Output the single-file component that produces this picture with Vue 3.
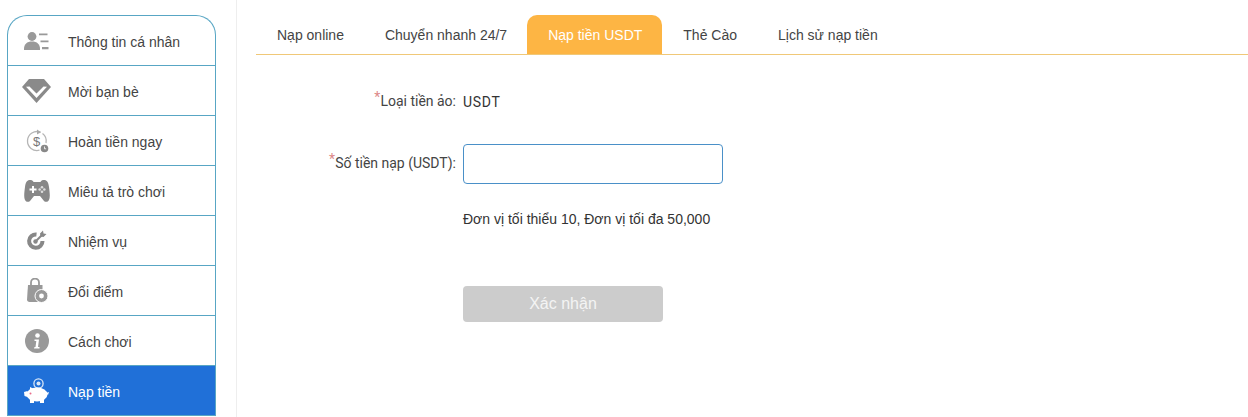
<script setup>
const menu = [
  { label: 'Thông tin cá nhân', icon: 'user' },
  { label: 'Mời bạn bè', icon: 'gem' },
  { label: 'Hoàn tiền ngay', icon: 'refund' },
  { label: 'Miêu tả trò chơi', icon: 'game' },
  { label: 'Nhiệm vụ', icon: 'target' },
  { label: 'Đổi điểm', icon: 'bag' },
  { label: 'Cách chơi', icon: 'info' },
  { label: 'Nạp tiền', icon: 'piggy', active: true },
]
const tabs = [
  { label: 'Nạp online' },
  { label: 'Chuyển nhanh 24/7' },
  { label: 'Nạp tiền USDT', active: true },
  { label: 'Thẻ Cào' },
  { label: 'Lịch sử nạp tiền' },
]
</script>

<template>
  <div class="page">
    <aside class="side">
      <ul class="menu">
        <li v-for="m in menu" :key="m.label" class="item" :class="{ active: m.active }">
          <span class="ico">
            <svg v-if="m.icon === 'user'" width="26" height="18" viewBox="0 0 26 18">
              <circle cx="8" cy="4.500" r="4.400" fill="#999" />
              <path d="M0 17c0-5 3-7.500 8-7.500s8 2.500 8 7.500v1H0z" fill="#999" />
              <path d="M15 1.500h8.500v1.800H15zM16.500 8.500h8v1.800h-8zM18 15h6.500v2.200H18z" fill="#999" />
            </svg>
            <svg v-else-if="m.icon === 'gem'" width="29" height="25" viewBox="0 0 29 25">
              <path d="M7 1h15l7 8-14.500 16L0 9z" fill="#8a8a8a" />
              <path d="M7.500 8.500l7 7 7-7 3.500.2L14.500 20 4 8.700z" fill="#fff" />
            </svg>
            <svg v-else-if="m.icon === 'refund'" width="24" height="24" viewBox="0 0 24 24">
              <path d="M15.500 3.200A9.500 9.500 0 1 0 14.500 21.200" fill="none" stroke="#b5b5b5" stroke-width="1.300" />
              <path d="M21 14A9.500 9.500 0 0 0 17.500 4.500" fill="none" stroke="#b5b5b5" stroke-width="1.300" />
              <path d="M12 .5l4 2.700-4 2.300z" fill="#aaa" />
              <text x="8" y="17" font-size="13" font-family="Liberation Sans" fill="#777">$</text>
              <circle cx="19.500" cy="19.500" r="3.800" fill="#888" />
              <path d="M19.500 17.500v2.300h1.600" fill="none" stroke="#fff" stroke-width=".8" />
            </svg>
            <svg v-else-if="m.icon === 'game'" width="26" height="24" viewBox="0 0 26 24">
              <path d="M6 1c1.500 0 3 .5 3.500 2h7C17 1.500 18.500 1 20 1c3 0 4.500 2.500 5 7s1.500 10 0 13c-1 2-3.500 2.500-5 1l-4-5H10l-4 5c-1.500 1.500-4 1-5-1C-.5 18 .5 12.500 1 8S3 1 6 1z" fill="#888" />
              <path d="M5.500 9.500h2.500v-2.500h2v2.500h2.500v2h-2.500v2.500h-2v-2.500H5.500z" fill="#fff" />
              <circle cx="18" cy="8.200" r="1.300" fill="#ddd" /><circle cx="18" cy="12.800" r="1.300" fill="#ddd" />
              <circle cx="15.700" cy="10.500" r="1.300" fill="#ddd" /><circle cx="20.300" cy="10.500" r="1.300" fill="#ddd" />
            </svg>
            <svg v-else-if="m.icon === 'target'" width="21" height="21" viewBox="0 0 21 21">
              <path d="M10.500 4.500A6.700 6.700 0 1 0 16.500 11" fill="none" stroke="#888" stroke-width="4" />
              <circle cx="9.500" cy="11.500" r="2.200" fill="#888" />
              <path d="M10 11l6-6" stroke="#888" stroke-width="2" />
              <path d="M14 3.500l3-3 .5 3 3 .5-3 3-3-.5z" fill="#888" />
            </svg>
            <svg v-else-if="m.icon === 'bag'" width="22" height="25" viewBox="0 0 22 25">
              <path d="M5 8V4.500a4 4 0 0 1 8 0V8" fill="none" stroke="#999" stroke-width="1.800" />
              <path d="M2 7h14.500v17H3.500C2 24 1 23 1 21.500z" fill="#999" />
              <circle cx="15.500" cy="18" r="6.500" fill="#999" stroke="#fff" stroke-width="1" />
              <circle cx="15.500" cy="18" r="2.400" fill="#fff" />
            </svg>
            <svg v-else-if="m.icon === 'info'" width="24" height="24" viewBox="0 0 24 24">
              <circle cx="12" cy="12" r="12" fill="#999" />
              <circle cx="12.500" cy="6.500" r="2.300" fill="#fff" />
              <path d="M9.500 10.500h4.500l-1 7.500h1.500v1.500H9l.5-1.500h1l.8-6H9.500z" fill="#fff" />
            </svg>
            <svg v-else width="25" height="26" viewBox="0 0 25 26">
              <circle cx="14.500" cy="5.500" r="4.600" fill="none" stroke="#dce8f7" stroke-width="1.300" />
              <circle cx="14.500" cy="5.500" r="2" fill="#dce8f7" />
              <ellipse cx="13" cy="16.500" rx="10.500" ry="7" fill="#fff" />
              <path d="M3.500 13l-3.500 1 .5 4 3 1zM6 21h4v4H6zM16 21h4v4h-4zM6 9l4 2-4 3zM22 15l3-1-1 3z" fill="#fff" />
              <circle cx="6.500" cy="15.500" r="1" fill="#e86a8a" />
            </svg>
          </span>
          <span class="lbl">{{ m.label }}</span>
        </li>
      </ul>
    </aside>
    <main class="main">
      <nav class="tabs">
        <div v-for="t in tabs" :key="t.label" class="tab" :class="{ on: t.active }">{{ t.label }}</div>
      </nav>
      <form class="form" @submit.prevent>
        <div class="row first">
          <label class="key"><i>*</i>Loại tiền ảo:</label>
          <span class="val">USDT</span>
        </div>
        <div class="row second">
          <label class="key"><i>*</i>Số tiền nạp (USDT):</label>
          <input class="inp" type="text" />
        </div>
        <p class="hint">Đơn vị tối thiểu 10, Đơn vị tối đa 50,000</p>
        <button class="btn" type="button">Xác nhận</button>
      </form>
    </main>
  </div>
</template>

<style>
html, body { margin: 0; background: #fff; overflow: hidden; }
</style>

<style scoped>
.page {
  display: flex;
  width: 1248px;
  height: 417px;
  overflow: hidden;
  font-family: "Liberation Sans", Arial, sans-serif;
  font-size: 14px;
  color: #444;
}
.side {
  box-sizing: border-box;
  width: 237px;
  flex: none;
  padding: 15px 20px 0 7px;
  border-right: 1px solid #eee;
}
.menu {
  list-style: none;
  margin: 0;
  padding: 0;
  border: 1px solid #58a6c4;
  border-bottom: 0;
  border-radius: 20px 20px 0 0;
}
.item {
  box-sizing: border-box;
  height: 50px;
  display: flex;
  align-items: center;
  border-bottom: 1px solid #58a6c4;
}
.item.active {
  background: #2070d8;
  color: #fff;
}
.ico {
  flex: none;
  width: 60px;
  display: flex;
  justify-content: center;
  padding-right: 3px;
  box-sizing: border-box;
}
.lbl { line-height: 20px; margin-top: 2px; }
.main {
  flex: 1;
  padding: 15px 0 0 19px;
  min-width: 0;
}
.tabs {
  display: flex;
  height: 40px;
  box-sizing: border-box;
  border-bottom: 1px solid #f0c878;
}
.tab {
  box-sizing: border-box;
  height: 39px;
  line-height: 39px;
  padding: 1px 20px 0 21px;
  color: #444;
  white-space: nowrap;
}
.tab.on {
  background: #fdb544;
  color: #fff;
  border-radius: 10px 10px 0 0;
}
.row { display: flex; align-items: center; }
.row.first { margin-top: 36px; height: 22px; }
.row.second { margin-top: 31px; height: 40px; }
.key {
  box-sizing: border-box;
  width: 207px;
  padding-right: 7px;
  text-align: right;
  color: #444;
  white-space: nowrap;
  line-height: 16px;
  margin-bottom: 3px;
  font-family: Roboto, "Liberation Sans", sans-serif;
}
.key i {
  color: #d88;
  font-style: normal;
  font-size: 14px;
  line-height: 0;
  position: relative;
  top: -4px;
}
.val {
  color: #333;
  letter-spacing: 0.7px;
  font-family: Roboto, "Liberation Sans", sans-serif;
}
.inp {
  box-sizing: border-box;
  width: 260px;
  height: 40px;
  padding: 0 10px;
  border: 1px solid #4a90c8;
  border-radius: 4px;
  outline: none;
  background: #fff;
}
.hint {
  margin: 27px 0 0 207px;
  line-height: 16px;
  color: #333;
}
.btn {
  display: block;
  width: 200px;
  height: 36px;
  margin: 59px 0 0 207px;
  padding: 0;
  border: 0;
  border-radius: 4px;
  background: #ccc;
  color: #f4f4f4;
  font: 16px "Liberation Sans", Arial, sans-serif;
}
</style>
